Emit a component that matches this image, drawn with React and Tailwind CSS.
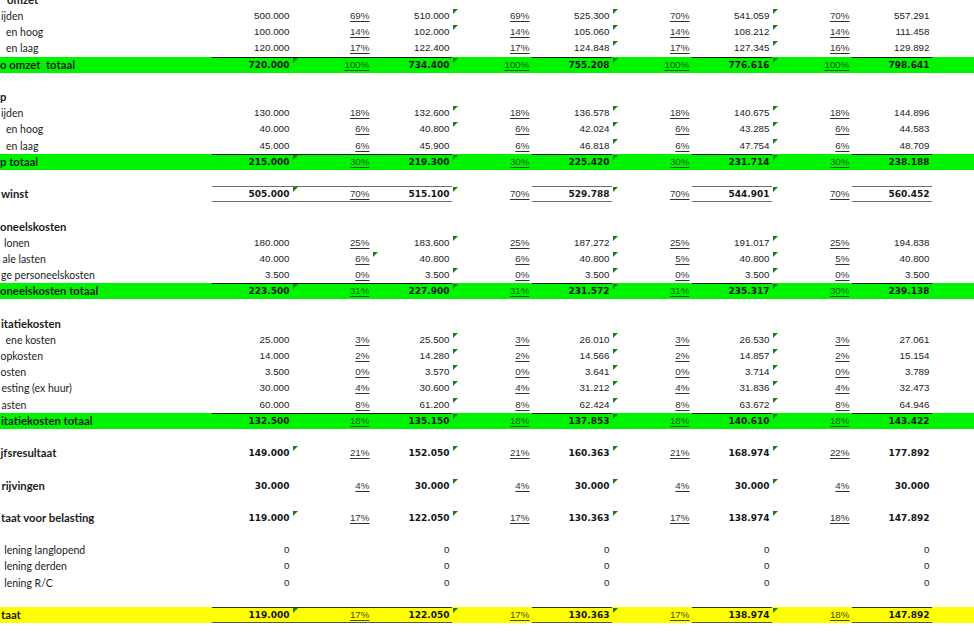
import React from 'react';

// kolommen: n1 p1 n2 p2 n3 p3 n4 p4 n5
const LINED = [0, 1, 2, 4, 6, 8];

const rows = [
  { t: 'header', label: 'omzet', pl: 7 },
  { t: 'item', label: 'ijden', pl: 1, v: ['500.000', '69%', '510.000', '69%', '525.300', '70%', '541.059', '70%', '557.291'], m: [3, 5, 7] },
  { t: 'item', label: 'en hoog', pl: 6, v: ['100.000', '14%', '102.000', '14%', '105.060', '14%', '108.212', '14%', '111.458'], m: [3, 5, 7] },
  { t: 'item', label: 'en laag', pl: 6, v: ['120.000', '17%', '122.400', '17%', '124.848', '17%', '127.345', '16%', '129.892'], m: [5, 7] },
  { t: 'total', label: 'o omzet  totaal', pl: 0, v: ['720.000', '100%', '734.400', '100%', '755.208', '100%', '776.616', '100%', '798.641'], m: [1, 3, 5, 7] },
  { t: 'blank' },
  { t: 'header', label: 'p', pl: 0 },
  { t: 'item', label: 'ijden', pl: 1, v: ['130.000', '18%', '132.600', '18%', '136.578', '18%', '140.675', '18%', '144.896'], m: [3, 5, 7] },
  { t: 'item', label: 'en hoog', pl: 6, v: ['40.000', '6%', '40.800', '6%', '42.024', '6%', '43.285', '6%', '44.583'], m: [3, 5, 7] },
  { t: 'item', label: 'en laag', pl: 6, v: ['45.000', '6%', '45.900', '6%', '46.818', '6%', '47.754', '6%', '48.709'], m: [5, 7] },
  { t: 'total', label: 'p totaal', pl: 0, v: ['215.000', '30%', '219.300', '30%', '225.420', '30%', '231.714', '30%', '238.188'], m: [1, 3, 5, 7] },
  { t: 'blank' },
  { t: 'sum', label: 'winst', pl: 1, v: ['505.000', '70%', '515.100', '70%', '529.788', '70%', '544.901', '70%', '560.452'], m: [1, 3, 5, 7] },
  { t: 'blank' },
  { t: 'header', label: 'oneelskosten', pl: 0 },
  { t: 'item', label: 'lonen', pl: 4, v: ['180.000', '25%', '183.600', '25%', '187.272', '25%', '191.017', '25%', '194.838'], m: [3, 5, 7] },
  { t: 'item', label: 'ale lasten', pl: 2.5, v: ['40.000', '6%', '40.800', '6%', '40.800', '5%', '40.800', '5%', '40.800'], m: [2, 5, 7] },
  { t: 'item', label: 'ge personeelskosten', pl: 1, v: ['3.500', '0%', '3.500', '0%', '3.500', '0%', '3.500', '0%', '3.500'], m: [3, 5, 7] },
  { t: 'total', label: 'oneelskosten totaal', pl: 0, v: ['223.500', '31%', '227.900', '31%', '231.572', '31%', '235.317', '30%', '239.138'], m: [1, 3, 5, 7] },
  { t: 'blank' },
  { t: 'header', label: 'itatiekosten', pl: 1 },
  { t: 'item', label: 'ene kosten', pl: 5.5, v: ['25.000', '3%', '25.500', '3%', '26.010', '3%', '26.530', '3%', '27.061'], m: [3, 5, 7] },
  { t: 'item', label: 'opkosten', pl: 0.5, v: ['14.000', '2%', '14.280', '2%', '14.566', '2%', '14.857', '2%', '15.154'], m: [3, 5, 7] },
  { t: 'item', label: 'osten', pl: 0.5, v: ['3.500', '0%', '3.570', '0%', '3.641', '0%', '3.714', '0%', '3.789'], m: [3, 5, 7] },
  { t: 'item', label: 'esting (ex huur)', pl: 1.5, v: ['30.000', '4%', '30.600', '4%', '31.212', '4%', '31.836', '4%', '32.473'], m: [3, 5, 7] },
  { t: 'item', label: 'asten', pl: 1.5, v: ['60.000', '8%', '61.200', '8%', '62.424', '8%', '63.672', '8%', '64.946'], m: [3, 5, 7] },
  { t: 'total', label: 'itatiekosten totaal', pl: 1, v: ['132.500', '18%', '135.150', '18%', '137.853', '18%', '140.610', '18%', '143.422'], m: [3, 5, 7] },
  { t: 'blank' },
  { t: 'bold', label: 'jfsresultaat', pl: 0.5, v: ['149.000', '21%', '152.050', '21%', '160.363', '21%', '168.974', '22%', '177.892'], m: [1, 3, 5, 7] },
  { t: 'blank' },
  { t: 'bold', label: 'rijvingen', pl: 1.5, v: ['30.000', '4%', '30.000', '4%', '30.000', '4%', '30.000', '4%', '30.000'], m: [3, 5, 7] },
  { t: 'blank' },
  { t: 'bold', label: 'taat voor belasting', pl: 1, v: ['119.000', '17%', '122.050', '17%', '130.363', '17%', '138.974', '18%', '147.892'], m: [1, 3, 5, 7] },
  { t: 'blank' },
  { t: 'item', label: ' lening langlopend', pl: 1.5, v: ['0', '', '0', '', '0', '', '0', '', '0'], m: [] },
  { t: 'item', label: ' lening derden', pl: 1.5, v: ['0', '', '0', '', '0', '', '0', '', '0'], m: [] },
  { t: 'item', label: ' lening R/C', pl: 1.5, v: ['0', '', '0', '', '0', '', '0', '', '0'], m: [] },
  { t: 'blank' },
  { t: 'final', label: 'taat', pl: 1, v: ['119.000', '17%', '122.050', '17%', '130.363', '17%', '138.974', '18%', '147.892'], m: [1, 3, 5, 7] },
];

function Marker() {
  return (
    <svg className="absolute left-[0.5px] top-[1px]" width="5" height="5" viewBox="0 0 5 5">
      <path d="M0 0H5L0 5Z" fill="#1d7a1d" />
    </svg>
  );
}

function Cell({ row, i, value }) {
  const pct = i % 2 === 1;
  const boldNum = !pct && row.t !== 'item';
  let line = '';
  if (LINED.includes(i)) {
    if (row.t === 'total') line = 'shadow-[inset_0_1px_0_#1a1a1a]';
    if (row.t === 'sum') line = 'shadow-[inset_0_1px_0_#6e6e6e,inset_0_-1px_0_#6e6e6e]';
    if (row.t === 'final') line = 'shadow-[inset_0_1px_0_#333,inset_0_-1px_0_#555]';
  }
  let font = "font-['Liberation_Sans',Arial,sans-serif] text-[9.8px] text-[#222]";
  if (boldNum) font = "font-['DejaVu_Sans',sans-serif] font-bold text-[9px] text-[#161616]";
  if (pct) {
    const c = row.t === 'total' ? 'text-[#1f5a1f]' : row.t === 'final' ? 'text-[#4a4a14]' : 'text-[#333]';
    font = `font-['Liberation_Sans',Arial,sans-serif] text-[9.8px] underline decoration-1 underline-offset-[1.5px] ${c}`;
  }
  return (
    <div className={`relative w-[80px] shrink-0 h-full pr-[2.5px] text-right leading-[16.2px] ${line} ${font}`}>
      {row.m.includes(i) && <Marker />}
      {value}
    </div>
  );
}

function Row({ row }) {
  const bg = row.t === 'total' ? 'bg-[#00f400]' : row.t === 'final' ? 'bg-[#ffff00]' : 'bg-white';
  const boldLabel = row.t !== 'item';
  return (
    <div className={`flex h-[16.2px] ${bg}`}>
      <div
        className={`w-[212px] shrink-0 overflow-hidden whitespace-pre font-['Lato',sans-serif] leading-[16.2px] text-[#1c1c1c] ${boldLabel ? 'font-bold text-[11.3px]' : 'text-[10.5px]'}`}
      >
        {row.label !== undefined && (
          <span className="block" style={{ marginLeft: row.pl }}>
            {row.label}
          </span>
        )}
      </div>
      {row.v && row.v.map((value, i) => <Cell key={i} row={row} i={i} value={value} />)}
      <div className="flex-1" />
    </div>
  );
}

export default function App() {
  return (
    <div className="w-[974px] h-[632px] overflow-hidden bg-white">
      <div className="-mt-[8.1px]">
        {rows.map((row, i) => <Row key={i} row={row} />)}
      </div>
    </div>
  );
}
